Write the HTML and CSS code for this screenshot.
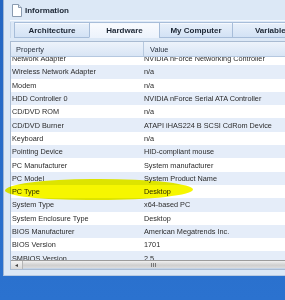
FILE: index.html
```html
<!DOCTYPE html>
<html lang="en">
<head>
  <meta charset="UTF-8" />
  <title>Information</title>
  <link rel="stylesheet" href="styles.css">
</head>
<body>
  <div class="window">
    <div class="title-bar">
      <svg class="doc-icon" width="10" height="13" viewBox="0 0 10 13">
        <path d="M0.5 0.5 H6.5 L9.5 3.5 V12.5 H0.5 Z" fill="#fff" stroke="#8a9bb0"/>
        <path d="M6.5 0.5 V3.5 H9.5" fill="#e4e9f0" stroke="#8a9bb0"/>
      </svg>
      <span class="title">Information</span>
    </div>

    <nav class="tabs">
      <a class="tab tab-arch">Architecture</a>
      <a class="tab tab-hw active">Hardware</a>
      <a class="tab tab-pc">My Computer</a>
      <a class="tab tab-var">Variables</a>
    </nav>

    <div class="grid">
      <div class="grid-head">
        <div class="col-prop">Property</div>
        <div class="col-val">Value</div>
      </div>
      <div class="grid-body">
        <div class="rows">
          <div class="row"><span class="col-prop">Network Adapter</span><span class="col-val">NVIDIA nForce Networking Controller</span></div>
          <div class="row alt"><span class="col-prop">Wireless Network Adapter</span><span class="col-val">n/a</span></div>
          <div class="row"><span class="col-prop">Modem</span><span class="col-val">n/a</span></div>
          <div class="row alt"><span class="col-prop">HDD Controller 0</span><span class="col-val">NVIDIA nForce Serial ATA Controller</span></div>
          <div class="row"><span class="col-prop">CD/DVD ROM</span><span class="col-val">n/a</span></div>
          <div class="row alt"><span class="col-prop">CD/DVD Burner</span><span class="col-val">ATAPI iHAS224 B SCSI CdRom Device</span></div>
          <div class="row"><span class="col-prop">Keyboard</span><span class="col-val">n/a</span></div>
          <div class="row alt"><span class="col-prop">Pointing Device</span><span class="col-val">HID-compliant mouse</span></div>
          <div class="row"><span class="col-prop">PC Manufacturer</span><span class="col-val">System manufacturer</span></div>
          <div class="row alt"><span class="col-prop">PC Model</span><span class="col-val">System Product Name</span></div>
          <div class="row"><span class="col-prop">PC Type</span><span class="col-val">Desktop</span></div>
          <div class="row alt"><span class="col-prop">System Type</span><span class="col-val">x64-based PC</span></div>
          <div class="row"><span class="col-prop">System Enclosure Type</span><span class="col-val">Desktop</span></div>
          <div class="row alt"><span class="col-prop">BIOS Manufacturer</span><span class="col-val">American Megatrends Inc.</span></div>
          <div class="row"><span class="col-prop">BIOS Version</span><span class="col-val">1701</span></div>
          <div class="row alt"><span class="col-prop">SMBIOS Version</span><span class="col-val">2.5</span></div>
        </div>
      </div>
      <div class="hscroll">
        <div class="scroll-btn">&#9666;</div>
        <div class="scroll-thumb"><span class="grip"></span></div>
      </div>
      <div class="marker"></div>
    </div>
  </div>
</body>
</html>
```

FILE: styles.css
```css
* {
  box-sizing: border-box;
  margin: 0;
  padding: 0;
}

body {
  width: 285px;
  height: 300px;
  overflow: hidden;
  background: linear-gradient(#2466c2, #2b72cf);
  font-family: 'Liberation Sans', Arial, sans-serif;
  color: #2b2b2b;
}

.window {
  margin-left: 3px;
  width: 310px;
  height: 276px;
  background: #dce8f6;
  border-left: 1px solid #9fb6d4;
  border-bottom: 1px solid #b8cbe3;
  padding-left: 6px;
}

.title-bar {
  height: 21px;
  display: flex;
  align-items: center;
  padding-left: 2px;
  border-bottom: 1px solid #f4f8fd;
}

.doc-icon {
  margin-right: 3px;
}

.title {
  font-size: 8px;
  font-weight: bold;
  color: #1b2533;
  margin-top: 1px;
}

.tabs {
  display: flex;
  height: 16px;
  margin-top: 1px;
  padding-left: 3px;
  border-left: 1px solid #c6d6ea;
}

.tab {
  display: flex;
  align-items: center;
  justify-content: center;
  font-size: 8px;
  font-weight: bold;
  color: #1b2533;
  border: 1px solid #a7bdd9;
  border-right: none;
  background: linear-gradient(#e8f0fa, #d3e2f5);
  box-shadow: inset 0 1px 0 #f6f9fe;
}

.tab-arch { width: 75px; }
.tab-hw { width: 70px; }
.tab-pc { width: 73px; }
.tab-var { width: 80px; }

.tab.active {
  background: linear-gradient(#f9fbfe, #edf3fc);
  border-bottom-color: #edf3fc;
}

.grid {
  position: relative;
  margin-top: 3px;
  border: 1px solid #a9bbd2;
  background: #fff;
  height: 229px;
  display: flex;
  flex-direction: column;
}

.col-prop {
  width: 133px;
  padding-left: 1px;
  flex-shrink: 0;
}

.col-val {
  white-space: nowrap;
}

.grid-head {
  display: flex;
  height: 15px;
  align-items: center;
  font-size: 7.4px;
  color: #2a3340;
  background: linear-gradient(#edf3fb, #d8e5f5);
  border-bottom: 1px solid #b5c8e0;
}

.grid-head .col-prop {
  padding-left: 5px;
  border-right: 1px solid #b7c9df;
  height: 100%;
  display: flex;
  align-items: center;
}

.grid-head .col-val {
  padding-left: 6px;
}

.grid-body {
  flex: 1;
  overflow: hidden;
}

.rows {
  margin-top: -5px;
}

.row {
  display: flex;
  align-items: center;
  height: 13.3px;
  font-size: 7.3px;
  white-space: nowrap;
}

.row.alt {
  background: #e5edf9;
}

.marker {
  position: absolute;
  left: -6px;
  top: 137px;
  width: 188px;
  height: 21px;
  border-radius: 46% 50% 50% 44% / 55% 50% 50% 45%;
  background: #f6f600;
  filter: blur(0.5px);
  mix-blend-mode: multiply;
}

.hscroll {
  display: flex;
  height: 9px;
  border-top: 1px solid #9c9c9c;
  background: #e6e6e6;
}

.scroll-btn {
  width: 12px;
  font-size: 6px;
  line-height: 8px;
  text-align: center;
  color: #444;
  background: linear-gradient(#f3f3f3, #d9d9d9);
  border-right: 1px solid #b5b5b5;
}

.scroll-thumb {
  flex: 1;
  position: relative;
  background: linear-gradient(#f0f0f0, #cfcfcf 60%, #dcdcdc);
  border-bottom: 1px solid #c4d4e8;
}

.grip {
  position: absolute;
  left: 128px;
  top: 2px;
  width: 5px;
  height: 4px;
  border-left: 1px solid #777;
  border-right: 1px solid #777;
  background: linear-gradient(90deg, transparent 1px, #777 1px, #777 2px, transparent 2px);
}
```
